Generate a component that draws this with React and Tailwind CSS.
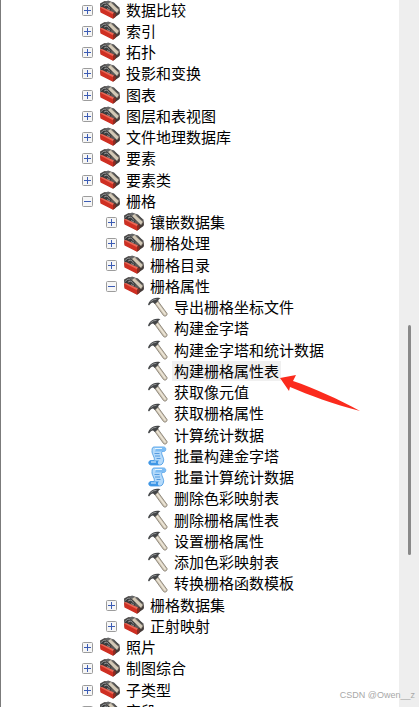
const rows = [
  [0, "plus", "数据比较"],
  [0, "plus", "索引"],
  [0, "plus", "拓扑"],
  [0, "plus", "投影和变换"],
  [0, "plus", "图表"],
  [0, "plus", "图层和表视图"],
  [0, "plus", "文件地理数据库"],
  [0, "plus", "要素"],
  [0, "plus", "要素类"],
  [0, "minus", "栅格"],
  [1, "plus", "镶嵌数据集"],
  [1, "plus", "栅格处理"],
  [1, "plus", "栅格目录"],
  [1, "minus", "栅格属性"],
  [2, "tool", "导出栅格坐标文件"],
  [2, "tool", "构建金字塔"],
  [2, "tool", "构建金字塔和统计数据"],
  [2, "tool", "构建栅格属性表"],
  [2, "tool", "获取像元值"],
  [2, "tool", "获取栅格属性"],
  [2, "tool", "计算统计数据"],
  [2, "script", "批量构建金字塔"],
  [2, "script", "批量计算统计数据"],
  [2, "tool", "删除色彩映射表"],
  [2, "tool", "删除栅格属性表"],
  [2, "tool", "设置栅格属性"],
  [2, "tool", "添加色彩映射表"],
  [2, "tool", "转换栅格函数模板"],
  [1, "plus", "栅格数据集"],
  [1, "plus", "正射映射"],
  [0, "plus", "照片"],
  [0, "plus", "制图综合"],
  [0, "plus", "子类型"],
  [0, "plus", "字段"],
];

const indents = ["pl-[81px]", "pl-[105px]", "pl-[146px]"];

function Toggle({ open, label }) {
  return (
    <button
      type="button"
      aria-label={label}
      aria-expanded={open}
      className="mt-[5px] mr-1.5 size-[11px] shrink-0"
    >
      <svg viewBox="0 0 11 11" className="block size-full">
        <rect x=".5" y=".5" width="10" height="10" rx="1" fill="#f6f6f6" stroke="#9c9c9c" />
        <path d="M2 5h7v1H2Z" fill="#3c5cb4" />
        {!open && <path d="M5 2h1v7H5Z" fill="#3c5cb4" />}
      </svg>
    </button>
  );
}

function ToolboxIcon() {
  return (
    <svg viewBox="0 0 22 20" className="mr-[5px] h-5 w-[22px] shrink-0" aria-hidden="true">
      <path d="M1 3.500 5.500 1 11 1.500 20.500 7.500 21 13 14 18.500 1.500 11.500Z" fill="#5d5957" />
      <path d="M1.500 4 5 2l8 5.500-2 4L2 7.500Z" fill="#3a3b3c" />
      <path d="M2 5.500 5 3l2 1M5 6l3-1 3 3.500M8 8.500l3 1.500" fill="none" stroke="#8f9091" />
      <path d="m13 13.500 7.500-4V14L14 18.500Z" fill="#453b38" />
      <path d="M1 7.500 14 13.500v5.300L1.500 12.500Z" fill="#cf2f22" />
      <path d="M1 7.500 3 7l12 5.500-1 1.800Z" fill="#ee6553" />
      <path d="m14 14 2.500-1.500v4.500L14 18.800Z" fill="#8f2a20" />
      <path d="m8.500 3.500 2.500-2L20 10l-2 3Z" fill="#d3c9b7" stroke="#7c766c" strokeWidth=".5" />
      <path d="m12 1.500 3 1 4.500 4.500-1 1Z" fill="#4a4a4a" />
      <path d="m6 2 3-1.500 3 1-3 2.500Z" fill="#666768" />
    </svg>
  );
}

function HammerIcon() {
  return (
    <svg viewBox="0 0 22 20" className="mr-[5px] h-5 w-[22px] shrink-0" aria-hidden="true">
      <path d="m7.500 6 3-2.500L20 16.500c.5 2-2 3.500-3.500 2Z" fill="#cfc6b4" stroke="#7c7568" strokeWidth=".8" />
      <path d="m10 6 8.500 11.500" stroke="#eee7d9" strokeWidth="1.300" />
      <path d="M1 7.500C2 4.500 4 2.500 6.500 1.500c2-.8 4.500-.9 7-.2-1.300.7-2 1.300-2.300 2.700L8 7 6 5.500C4.500 5.500 3.500 6.500 2 8.500Z" fill="#434547" />
      <path d="m3.500 4.800 3-2 3-.5" fill="none" stroke="#96989a" strokeWidth=".9" />
    </svg>
  );
}

function ScriptIcon() {
  return (
    <svg viewBox="0 0 22 20" className="mr-[5px] h-5 w-[22px] shrink-0" aria-hidden="true">
      <path d="M7 1h9.500c3 0 3 4.500 0 4.500H15c-1.500 3 2.500 6 1.500 9.500-.5 3-2 4-4 4H4c-3 0-3-4.500 0-4.500h3c1.500-3-2.500-6-2-10C5 2.500 5.500 1 7 1Z" fill="#b5dafa" stroke="#3f96e2" strokeWidth=".8" />
      <path d="M7 1c2 0 2.500 3.500.5 4.500H16.500c3 0 3-4.500 0-4.500Z" fill="#7cbcf4" />
      <path d="M4 14.500h8c-1.500 1-1.500 3.500 0 4.500H4c-3 0-3-4.500 0-4.500Z" fill="#3f97e6" />
      <path d="M7.500 7.500h5M8 10h5M9.500 12.500h4" stroke="#4a93da" strokeWidth=".9" />
      <path d="M8 2.500h7M4 16h5" stroke="#e7f6ff" strokeWidth="1.200" />
    </svg>
  );
}

function TreeRow({ level, kind, label }) {
  const folder = kind === "plus" || kind === "minus";
  const selected = label === "构建栅格属性表";
  return (
    <li className={`flex h-[21px] items-start nth-[4n]:h-[22px] ${indents[level]}`}>
      {folder && <Toggle open={kind === "minus"} label={label} />}
      {folder && <ToolboxIcon />}
      {kind === "tool" && <HammerIcon />}
      {kind === "script" && <ScriptIcon />}
      <span className={`relative whitespace-nowrap leading-5 ${selected ? "-mx-0.5 bg-[#f0f0f0] px-0.5" : ""}`}>
        {label}
        {selected && (
          <svg viewBox="0 0 80 36" className="absolute top-[14px] left-full -ml-px h-9 w-20" aria-hidden="true">
            <path d="M0 3 16 0 13 6C34 13 58 24 80 36 53 29 29 20 10 12L9 16Z" fill="#fb2b1d" />
          </svg>
        )}
      </span>
    </li>
  );
}

export default function App() {
  return (
    <main className="relative flex h-screen overflow-hidden border-l border-[#7b7b7b] bg-white font-['Noto_Sans_CJK_SC',sans-serif] text-[15px] text-black">
      <ul className="min-w-0 flex-1">
        {rows.map(([level, kind, label]) => (
          <TreeRow key={label} level={level} kind={kind} label={label} />
        ))}
      </ul>
      <aside className="flex w-5 shrink-0 justify-center bg-[#eeeeee] pt-[325px]">
        <div className="h-[230px] w-[3px] rounded-full bg-[#898989]" />
      </aside>
      <p className="absolute right-1 bottom-1 font-['Liberation_Sans',sans-serif] text-[9px] leading-4 text-[#a8a8a8]">
        CSDN @Owen__z
      </p>
    </main>
  );
}
